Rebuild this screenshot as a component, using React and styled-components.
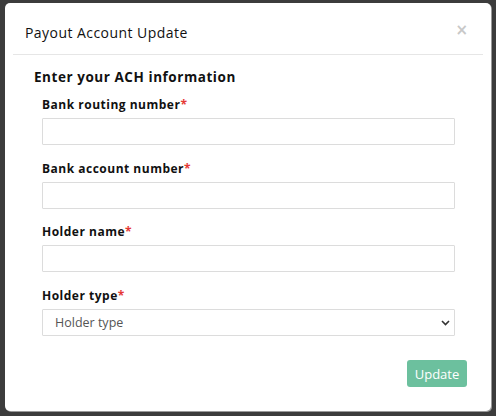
import React from "react";
import styled, { createGlobalStyle } from "styled-components";

const Global = createGlobalStyle`
  html, body { margin: 0; padding: 0; background: #3c3c3c; }
  body { font-family: "Open Sans", "Liberation Sans", sans-serif; }
  * { box-sizing: border-box; }
`;

const Backdrop = styled.div`
  width: 496px;
  height: 416px;
  padding: 3px 5px 5px 5px;
  background: #3c3c3c;
`;

const Modal = styled.div`
  width: 486px;
  height: 408px;
  background: #fff;
  border-radius: 5px;
  box-shadow: 1px 1px 0 #9a9a9a;
  display: flex;
  flex-direction: column;
`;

const Header = styled.div`
  margin: 0 8px;
  height: 52px;
  border-bottom: 1px solid #e6e6e6;
  display: flex;
  align-items: center;
  justify-content: space-between;
  padding: 8px 15px 0 12px;
`;

const Title = styled.h2`
  margin: 0;
  font-size: 14px;
  font-weight: 400;
  color: #111;
  letter-spacing: 0.45px;
`;

const Close = styled.button`
  border: 0;
  background: none;
  padding: 0;
  font-family: "DejaVu Sans", sans-serif;
  font-size: 15px;
  font-weight: 700;
  color: #c8c8c8;
  line-height: 1;
  margin-top: -4px;
`;

const Body = styled.div`
  flex: 1;
  padding: 12px 36px 0 29px;
  display: flex;
  flex-direction: column;
`;

const Heading = styled.h3`
  margin: 0 0 9px;
  font-size: 13.5px;
  font-weight: 700;
  letter-spacing: 0.55px;
  line-height: 20px;
  color: #111;
`;

const Fields = styled.div`
  padding-left: 8px;
  display: flex;
  flex-direction: column;
  gap: 14.5px;
`;

const Field = styled.div`
  display: flex;
  flex-direction: column;
  gap: 4px;
`;

const Label = styled.label`
  font-size: 12px;
  font-weight: 700;
  letter-spacing: 0.5px;
  color: #111;
  line-height: 18px;
`;

const Req = styled.span`
  color: #e53935;
`;

const Input = styled.input`
  height: 27px;
  width: 413px;
  border: 1px solid #dcdcdc;
  border-radius: 1px;
  background: #fff;
  font-family: inherit;
  font-size: 13px;
  padding: 0 12px;
`;

const SelectWrap = styled.div`
  position: relative;
  width: 413px;
  height: 27px;
`;

const Select = styled.select`
  appearance: none;
  width: 100%;
  height: 100%;
  border: 1px solid #dcdcdc;
  border-radius: 1px;
  background: #fff;
  font-family: inherit;
  font-size: 12.5px;
  font-weight: 500;
  color: #555;
  padding: 0 12px;
`;

const Chevron = styled.svg`
  position: absolute;
  right: 5px;
  top: 11px;
  pointer-events: none;
`;

const Footer = styled.div`
  margin-top: auto;
  padding: 0 24px 24px;
  display: flex;
  justify-content: flex-end;
`;

const Button = styled.button`
  width: 60px;
  height: 27px;
  border: 0;
  border-radius: 3px;
  background: #6cc09e;
  color: #fff;
  font-family: inherit;
  font-size: 13px;
  padding: 0;
`;

const fields = ["Bank routing number", "Bank account number", "Holder name"];

export default function App() {
  return (
    <>
      <Global />
      <Backdrop>
        <Modal>
          <Header>
            <Title>Payout Account Update</Title>
            <Close aria-label="Close">×</Close>
          </Header>
          <Body>
            <Heading>Enter your ACH information</Heading>
            <Fields>
              {fields.map((f) => (
                <Field key={f}>
                  <Label>
                    {f}
                    <Req>*</Req>
                  </Label>
                  <Input />
                </Field>
              ))}
              <Field>
                <Label>
                  Holder type<Req>*</Req>
                </Label>
                <SelectWrap>
                  <Select defaultValue="">
                    <option value="">Holder type</option>
                    <option value="individual">Individual</option>
                    <option value="company">Company</option>
                  </Select>
                  <Chevron width="9" height="6" viewBox="0 0 9 6">
                    <path d="M1 1l3.5 3.5L8 1" stroke="#333" strokeWidth="1.6" fill="none" />
                  </Chevron>
                </SelectWrap>
              </Field>
            </Fields>
          </Body>
          <Footer>
            <Button>Update</Button>
          </Footer>
        </Modal>
      </Backdrop>
    </>
  );
}
